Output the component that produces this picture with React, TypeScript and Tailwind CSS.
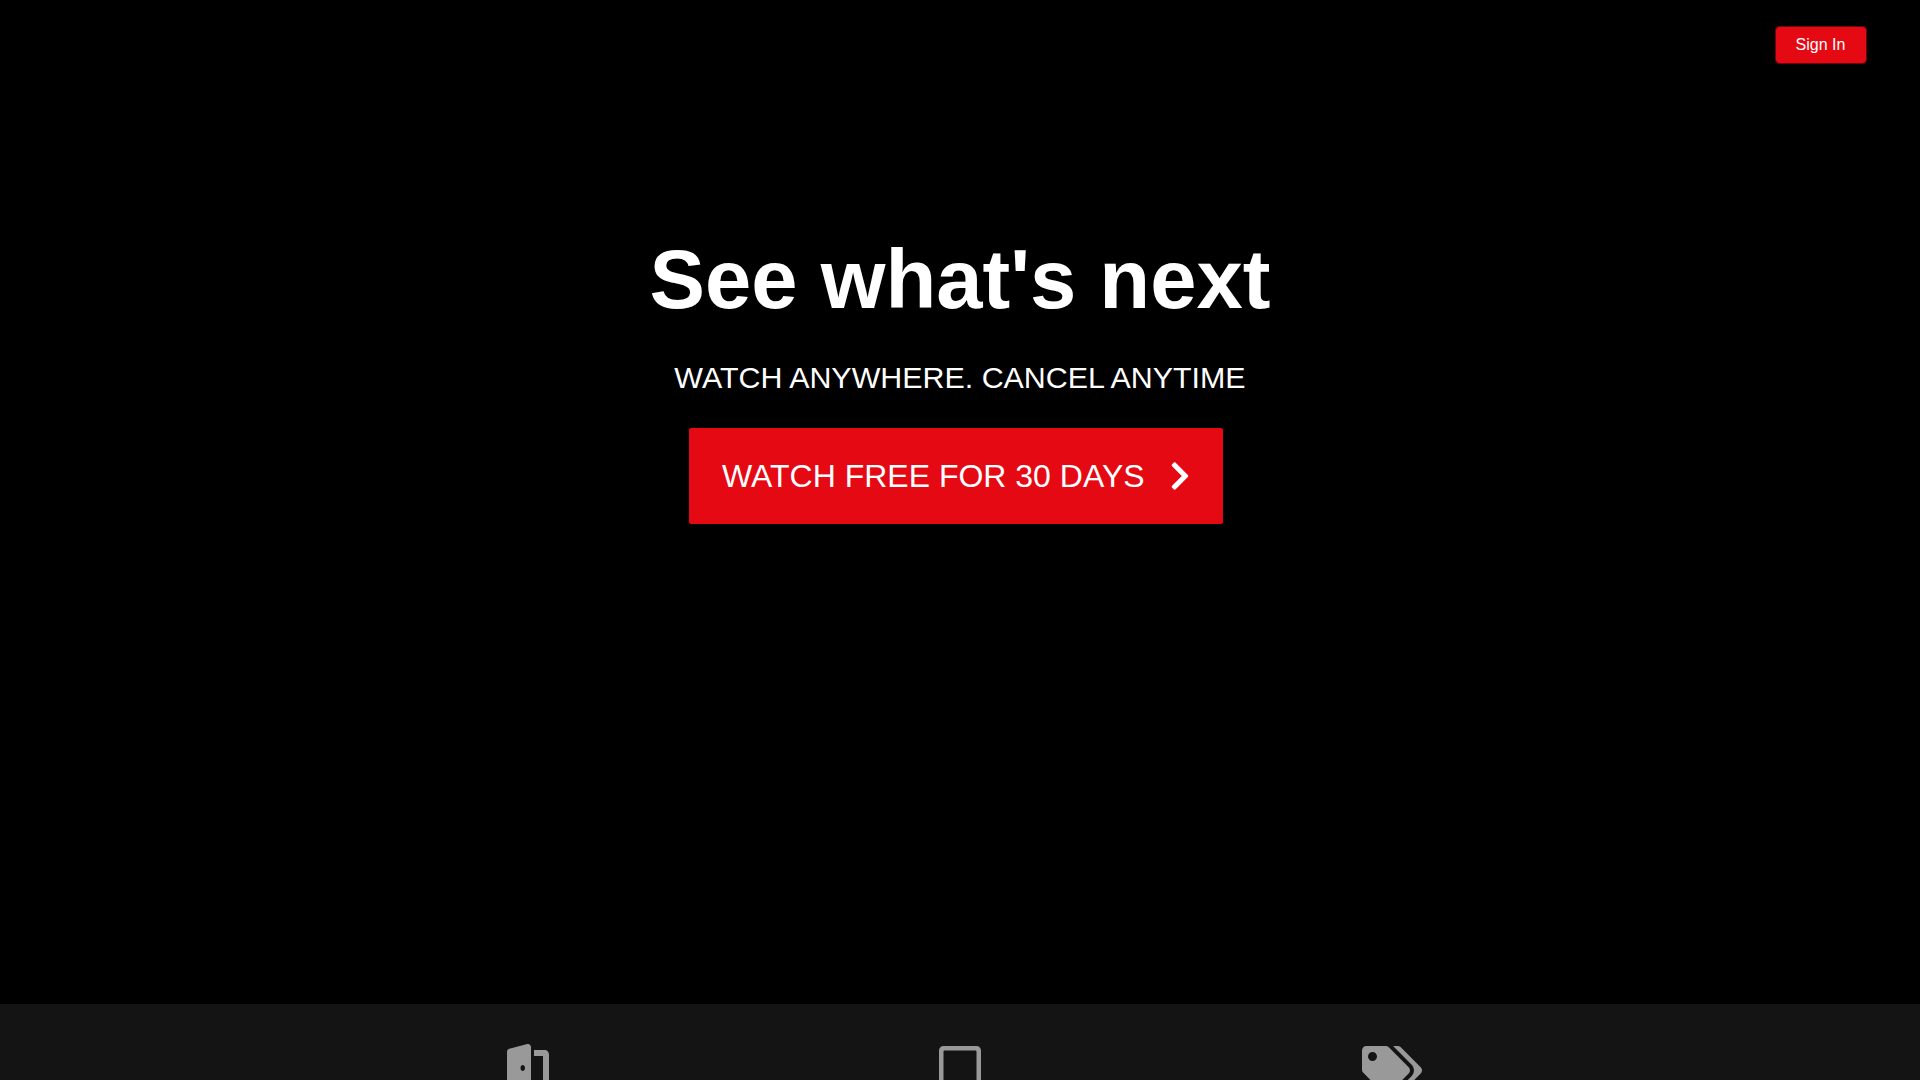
import React from 'react';
import { FaChevronRight, FaDoorOpen, FaTabletAlt, FaTags } from 'react-icons/fa';

export default function App() {
  return (
    <div className="flex h-[1080px] w-full flex-col overflow-hidden bg-black font-['Liberation_Sans',Arial,sans-serif] text-white">
      <header className="flex h-[1004px] shrink-0 flex-col">
        <div className="flex h-[63px] justify-end pt-[26px] pr-[53px]">
          <a className="flex h-[38px] w-[92px] shrink-0 items-center justify-center rounded-[4px] border border-[#70040a] bg-[#e50914] bg-clip-padding pr-px pb-px text-[16px] leading-[18px]">Sign In</a>
        </div>
        <div className="mt-[169px] flex flex-col items-center">
          <h1 className="text-[83.2px] leading-[96px] font-bold">See what's next</h1>
          <p className="mt-[31px] text-[30.4px] leading-[36px] uppercase">Watch anywhere. Cancel anytime</p>
          <a className="mt-[33px] mr-[8px] flex h-[96px] w-[534px] items-center justify-between rounded-[2px] bg-[#e50914] px-[33px] text-[32px]">
            WATCH FREE FOR 30 DAYS
            <FaChevronRight className="mb-px h-8 w-5" />
          </a>
        </div>
      </header>
      <section className="flex h-[76px] shrink-0 justify-center overflow-hidden bg-[#141414] text-[#999]">
        <nav className="grid w-[1296px] grid-cols-3 justify-items-center pt-[40px]">
          <FaDoorOpen className="h-[48px] w-[60px]" />
          <FaTabletAlt className="mt-[2px] h-[48px] w-[42px]" />
          <FaTags className="mt-[2px] h-[48px] w-[60px]" />
        </nav>
      </section>
    </div>
  );
}
